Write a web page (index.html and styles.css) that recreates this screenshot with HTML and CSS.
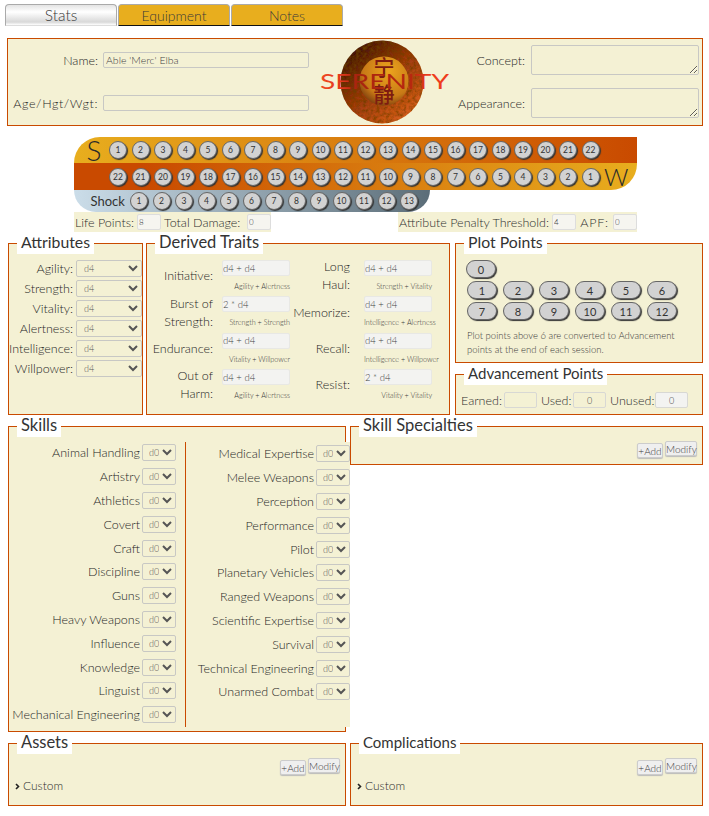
FILE: index.html
```html
<!DOCTYPE html>
<html lang="en">
<head>
<meta charset="utf-8">
<title>Serenity Character Sheet</title>
<link rel="stylesheet" href="styles.css">
</head>
<body>
<nav class="tabs">
  <a class="tab tab-active">Stats</a>
  <a class="tab">Equipment</a>
  <a class="tab">Notes</a>
</nav>

<header class="identity">
  <div class="id-left">
    <label class="lbl">Name:</label><input class="field" value="Able 'Merc' Elba">
    <label class="lbl lbl-wide">Age/Hgt/Wgt:</label><input class="field">
  </div>
  <svg class="logo" width="129" height="84" viewBox="0 0 129 84">
    <defs>
      <linearGradient id="outer" x1="0.15" y1="0.1" x2="0.85" y2="0.9">
        <stop offset="0" stop-color="#3e140c"/>
        <stop offset="0.45" stop-color="#9a3810"/>
        <stop offset="1" stop-color="#d8601c"/>
      </linearGradient>
      <radialGradient id="inner" cx="0.6" cy="0.3" r="0.75">
        <stop offset="0" stop-color="#eca41e"/>
        <stop offset="0.7" stop-color="#c87a16"/>
        <stop offset="1" stop-color="#7a3c0e"/>
      </radialGradient>
      <linearGradient id="nameFill" gradientUnits="userSpaceOnUse" x1="0" y1="0" x2="129" y2="0">
        <stop offset="0" stop-color="#f04a22"/>
        <stop offset="0.17" stop-color="#e2381c"/>
        <stop offset="0.28" stop-color="#a8240f"/>
        <stop offset="0.72" stop-color="#b8280f"/>
        <stop offset="0.84" stop-color="#ee3c1c"/>
        <stop offset="1" stop-color="#ee3c1c"/>
      </linearGradient>
      <filter id="tex" x="0" y="0" width="100%" height="100%">
        <feTurbulence type="fractalNoise" baseFrequency="0.3" numOctaves="3" seed="4" result="n"/>
        <feColorMatrix in="n" type="matrix" values="0 0 0 0 0.15  0 0 0 0 0.05  0 0 0 0 0  0 0 0 1.6 -0.55" result="d"/>
        <feComposite in="d" in2="SourceAlpha" operator="in" result="c"/>
        <feMerge><feMergeNode in="SourceGraphic"/><feMergeNode in="c"/></feMerge>
      </filter>
    </defs>
    <circle cx="62" cy="42" r="41.5" fill="url(#outer)" filter="url(#tex)"/>
    <circle cx="64" cy="41" r="24.5" fill="url(#inner)"/>
    <text class="logo-cjk" x="64" y="35" text-anchor="middle">宁</text>
    <text class="logo-cjk" x="64" y="62" text-anchor="middle">静</text>
    <text class="logo-name" x="0" y="49" textLength="129" lengthAdjust="spacingAndGlyphs">SERENITY</text>
  </svg>
  <div class="id-right">
    <label class="lbl">Concept:</label><textarea class="area"></textarea>
    <label class="lbl">Appearance:</label><textarea class="area"></textarea>
  </div>
</header>

<section class="track">
  <div class="track-row row-stun">
    <span class="track-letter">S</span>
    <span class="pip">1</span><span class="pip">2</span><span class="pip">3</span><span class="pip">4</span><span class="pip">5</span><span class="pip">6</span><span class="pip">7</span><span class="pip">8</span><span class="pip">9</span><span class="pip">10</span><span class="pip">11</span><span class="pip">12</span><span class="pip">13</span><span class="pip">14</span><span class="pip">15</span><span class="pip">16</span><span class="pip">17</span><span class="pip">18</span><span class="pip">19</span><span class="pip">20</span><span class="pip">21</span><span class="pip">22</span>
  </div>
  <div class="track-row row-wound">
    <span class="pip">22</span><span class="pip">21</span><span class="pip">20</span><span class="pip">19</span><span class="pip">18</span><span class="pip">17</span><span class="pip">16</span><span class="pip">15</span><span class="pip">14</span><span class="pip">13</span><span class="pip">12</span><span class="pip">11</span><span class="pip">10</span><span class="pip">9</span><span class="pip">8</span><span class="pip">7</span><span class="pip">6</span><span class="pip">5</span><span class="pip">4</span><span class="pip">3</span><span class="pip">2</span><span class="pip">1</span>
    <span class="letter-w">W</span>
  </div>
  <div class="track-row row-shock">
    <span class="shock-label">Shock</span>
    <span class="pip">1</span><span class="pip">2</span><span class="pip">3</span><span class="pip">4</span><span class="pip">5</span><span class="pip">6</span><span class="pip">7</span><span class="pip">8</span><span class="pip">9</span><span class="pip">10</span><span class="pip">11</span><span class="pip">12</span><span class="pip">13</span>
  </div>
  <div class="life-row">
    <div class="life-group"><span>Life Points:</span><input class="mini" value="8"><span class="life-total">Total Damage:</span><input class="mini" value="0"></div>
    <div class="life-group"><span class="life-threshold">Attribute Penalty Threshold:</span><input class="mini" value="4"><span class="life-apf">APF:</span><input class="mini" value="0"></div>
  </div>
</section>

<div class="stats-grid">
  <fieldset class="panel panel-attr">
    <legend class="legend-narrow">Attributes</legend>
    <div class="attr-list">
      <label class="lbl">Agility:</label><select class="sel"><option>d4</option></select>
      <label class="lbl">Strength:</label><select class="sel"><option>d4</option></select>
      <label class="lbl">Vitality:</label><select class="sel"><option>d4</option></select>
      <label class="lbl">Alertness:</label><select class="sel"><option>d4</option></select>
      <label class="lbl">Intelligence:</label><select class="sel"><option>d4</option></select>
      <label class="lbl">Willpower:</label><select class="sel"><option>d4</option></select>
    </div>
  </fieldset>

  <fieldset class="panel panel-derived">
    <legend>Derived Traits</legend>
    <div class="derived-cols">
      <div class="derived-col">
        <div class="trait"><label class="lbl">Initiative:</label><div class="trait-val"><input class="calc" value="d4 + d4"><small>Agility + Alertness</small></div></div>
        <div class="trait"><label class="lbl">Burst of<br>Strength:</label><div class="trait-val"><input class="calc" value="2 * d4"><small>Strength + Strength</small></div></div>
        <div class="trait"><label class="lbl">Endurance:</label><div class="trait-val"><input class="calc" value="d4 + d4"><small>Vitality + Willpower</small></div></div>
        <div class="trait"><label class="lbl">Out of<br>Harm:</label><div class="trait-val"><input class="calc" value="d4 + d4"><small>Agility + Alertness</small></div></div>
      </div>
      <div class="derived-col">
        <div class="trait"><label class="lbl">Long<br>Haul:</label><div class="trait-val"><input class="calc" value="d4 + d4"><small>Strength + Vitality</small></div></div>
        <div class="trait"><label class="lbl">Memorize:</label><div class="trait-val"><input class="calc" value="d4 + d4"><small>Intelligence + Alertness</small></div></div>
        <div class="trait"><label class="lbl">Recall:</label><div class="trait-val"><input class="calc" value="d4 + d4"><small>Intelligence + Willpower</small></div></div>
        <div class="trait"><label class="lbl">Resist:</label><div class="trait-val"><input class="calc" value="2 * d4"><small>Vitality + Vitality</small></div></div>
      </div>
    </div>
  </fieldset>

  <div class="right-stack">
    <fieldset class="panel panel-plot">
      <legend class="legend-narrow">Plot Points</legend>
      <div class="plot-zero"><span class="plot">0</span></div>
      <div class="plot-grid">
        <span class="plot">1</span><span class="plot">2</span><span class="plot">3</span><span class="plot">4</span><span class="plot">5</span><span class="plot">6</span>
        <span class="plot">7</span><span class="plot">8</span><span class="plot">9</span><span class="plot">10</span><span class="plot">11</span><span class="plot">12</span>
      </div>
      <p class="plot-note">Plot points above 6 are converted to Advancement points at the end of each session.</p>
    </fieldset>
    <fieldset class="panel panel-adv">
      <legend class="legend-tight">Advancement Points</legend>
      <div class="adv-row">
        <span class="adv-earned">Earned:</span><input class="mini-adv">
        <span class="adv-used">Used:</span><input class="mini-adv mini-num" value="0">
        <span class="adv-unused">Unused:</span><input class="mini-adv mini-num mini-gray" value="0">
      </div>
    </fieldset>
  </div>
</div>

<div class="skills-grid">
  <fieldset class="panel panel-skills">
    <legend>Skills</legend>
    <div class="skill-cols">
      <div class="skill-col skill-col-left">
        <div class="skill"><label class="lbl">Animal Handling</label><select class="sel-s"><option>d0</option></select></div>
        <div class="skill"><label class="lbl">Artistry</label><select class="sel-s"><option>d0</option></select></div>
        <div class="skill"><label class="lbl">Athletics</label><select class="sel-s"><option>d0</option></select></div>
        <div class="skill"><label class="lbl">Covert</label><select class="sel-s"><option>d0</option></select></div>
        <div class="skill"><label class="lbl">Craft</label><select class="sel-s"><option>d0</option></select></div>
        <div class="skill"><label class="lbl">Discipline</label><select class="sel-s"><option>d0</option></select></div>
        <div class="skill"><label class="lbl">Guns</label><select class="sel-s"><option>d0</option></select></div>
        <div class="skill"><label class="lbl">Heavy Weapons</label><select class="sel-s"><option>d0</option></select></div>
        <div class="skill"><label class="lbl">Influence</label><select class="sel-s"><option>d0</option></select></div>
        <div class="skill"><label class="lbl">Knowledge</label><select class="sel-s"><option>d0</option></select></div>
        <div class="skill"><label class="lbl">Linguist</label><select class="sel-s"><option>d0</option></select></div>
        <div class="skill"><label class="lbl">Mechanical Engineering</label><select class="sel-s"><option>d0</option></select></div>
      </div>
      <div class="skill-col skill-col-right">
        <div class="skill"><label class="lbl">Medical Expertise</label><select class="sel-s"><option>d0</option></select></div>
        <div class="skill"><label class="lbl">Melee Weapons</label><select class="sel-s"><option>d0</option></select></div>
        <div class="skill"><label class="lbl">Perception</label><select class="sel-s"><option>d0</option></select></div>
        <div class="skill"><label class="lbl">Performance</label><select class="sel-s"><option>d0</option></select></div>
        <div class="skill"><label class="lbl">Pilot</label><select class="sel-s"><option>d0</option></select></div>
        <div class="skill"><label class="lbl">Planetary Vehicles</label><select class="sel-s"><option>d0</option></select></div>
        <div class="skill"><label class="lbl">Ranged Weapons</label><select class="sel-s"><option>d0</option></select></div>
        <div class="skill"><label class="lbl">Scientific Expertise</label><select class="sel-s"><option>d0</option></select></div>
        <div class="skill"><label class="lbl">Survival</label><select class="sel-s"><option>d0</option></select></div>
        <div class="skill"><label class="lbl">Technical Engineering</label><select class="sel-s"><option>d0</option></select></div>
        <div class="skill"><label class="lbl">Unarmed Combat</label><select class="sel-s"><option>d0</option></select></div>
      </div>
    </div>
  </fieldset>
  <fieldset class="panel panel-spec">
    <legend>Skill Specialties</legend>
    <div class="btn-row"><button class="btn btn-add">+Add</button><button class="btn btn-mod">Modify</button></div>
  </fieldset>
</div>

<div class="bottom-grid">
  <fieldset class="panel panel-list">
    <legend>Assets</legend>
    <div class="btn-row"><button class="btn btn-add">+Add</button><button class="btn btn-mod">Modify</button></div>
    <div class="custom"><svg class="chev" width="5" height="7" viewBox="0 0 5 7"><path d="M1 1l2.5 2.5L1 6" fill="none" stroke="#222" stroke-width="1.6"/></svg>Custom</div>
  </fieldset>
  <fieldset class="panel panel-list">
    <legend class="legend-tight">Complications</legend>
    <div class="btn-row"><button class="btn btn-add">+Add</button><button class="btn btn-mod">Modify</button></div>
    <div class="custom"><svg class="chev" width="5" height="7" viewBox="0 0 5 7"><path d="M1 1l2.5 2.5L1 6" fill="none" stroke="#222" stroke-width="1.6"/></svg>Custom</div>
  </fieldset>
</div>
</body>
</html>
```

FILE: styles.css
```css
* { box-sizing: border-box; }
html, body { margin: 0; padding: 0; }
body {
  width: 709px;
  height: 816px;
  overflow: hidden;
  background: #fff;
  color: #2e2e2e;
  font-family: "Lato", "Liberation Sans", sans-serif;
  font-weight: 300;
  font-size: 12.5px;
}

/* Tabs */
.tabs { display: flex; gap: 1px; padding: 4px 0 0 5px; height: 38px; }
.tab {
  width: 112px; height: 22px;
  display: flex; align-items: center; justify-content: center;
  border: 1px solid #aaa; border-bottom: 1px solid #111; border-radius: 4px 4px 0 0;
  background: #e8ae1e; color: #3a3a3a; font-size: 14px;
}
.tab-active {
  background: linear-gradient(#e4e4e4, #fff 35%, #d8d8d8 85%, #fff);
  border-bottom-color: #ddd;
  font-size: 15.5px;
}

/* Identity */
.identity {
  display: flex; margin-left: 7px; width: 696px; height: 88px;
  background: #f4f1d4; border: 1px solid #c94a00;
}
.lbl { text-align: right; color: #262626; }
.lbl-wide { letter-spacing: 0.6px; white-space: nowrap; }
.id-left {
  display: grid; grid-template-columns: 90px 206px; column-gap: 5px; row-gap: 27px;
  align-content: start; align-items: center; padding-top: 13px; width: 301px;
}
.field {
  height: 16px; border: 1px solid #c8c8c4; border-radius: 2px; background: #f4f1d4;
  font: 300 10.5px "Lato", sans-serif; color: #444; padding: 0 2px;
}
.logo { margin: 1px 0 0 11px; flex: none; }
.logo-cjk { font-family: "Noto Sans CJK SC", sans-serif; font-size: 21px; font-weight: 500; fill: #7e1c10; }
.logo-name { font-family: "Lato", sans-serif; font-size: 22px; font-weight: 400; fill: url(#nameFill); }
.id-right {
  display: grid; grid-template-columns: 76px 168px; column-gap: 6px; row-gap: 13px;
  align-content: start; align-items: center; padding-top: 6px;
}
.area {
  height: 30px; border: 1px solid #c8c8c4; border-radius: 2px; background: #f4f1d4; margin: 0;
}

/* Track */
.track { margin: 11px 0 0 74px; width: 563px; }
.track-row { display: flex; align-items: center; gap: 4.5px; }
.row-stun {
  height: 26px; padding-left: 35px;
  background: linear-gradient(90deg, #e8ae1e, #c94a00);
  border-radius: 26px 0 0 0;
}
.row-wound {
  height: 27px; padding-left: 35px;
  background: linear-gradient(90deg, #c94a00 0, #c94a00 12%, #e8ae1e 100%);
  border-radius: 0 0 26px 0;
}
.row-shock {
  height: 22px; width: 356px; padding-left: 56px;
  background: linear-gradient(90deg, #cbdde9, #5b6d78);
  border-radius: 0 0 26px 26px;
}
.track-letter { font-size: 28px; font-weight: 300; color: #2a2a2a; width: 0; margin-left: -4.5px; transform: translateX(-18px); line-height: 1; }
.letter-w { font-size: 24px; font-weight: 300; color: #2a2a2a; line-height: 1; margin-left: 0; }
.shock-label { width: 0; margin-left: -4.5px; transform: translateX(-35px); font-size: 13px; color: #333; font-weight: 400; }
.pip {
  flex: none; width: 18px; height: 18px; border-radius: 50%;
  display: flex; align-items: center; justify-content: center;
  background: #d2d2d2; border: 1px solid #666; box-shadow: 1px 1px 1px #333;
  font-size: 8.5px; color: #333; font-weight: 400;
}
.life-row { display: flex; justify-content: space-between; height: 20px; }
.life-group {
  display: flex; align-items: center; gap: 3px; background: #f4f1d4; padding-left: 1px;
}
.life-total { min-width: 80px; white-space: nowrap; }
.life-threshold { white-space: nowrap; }
.life-apf { min-width: 31px; text-align: center; letter-spacing: 0.8px; }
.mini {
  width: 24px; height: 16px; border: 1px solid #ddd; border-radius: 2px; background: #f6f5f0;
  font: 300 8px "Lato", sans-serif; padding: 0 1px; color: #444;
}

/* Panels */
.panel {
  margin: 0; min-width: 0; padding: 0;
  background: #f4f1d4; border: 1px solid #c94a00;
}
.panel legend {
  margin-left: 8px; padding: 0 4px; height: 22px; background: #fff;
  font-size: 16.5px; line-height: 20px; color: #333; font-weight: 400;
}
.panel legend.legend-narrow { font-size: 15.8px; }
.panel legend.legend-tight { font-size: 15px; }

.stats-grid {
  display: grid; grid-template-columns: 135px 304px 250px; height: 183px;
  margin-left: 8px; column-gap: 3px;
}
.right-stack { margin-left: 2px; display: flex; flex-direction: column; }
.attr-list {
  display: grid; grid-template-columns: 64px 66px; column-gap: 3px; row-gap: 3px;
  grid-auto-rows: 17px; align-items: center; padding-top: 6px;
}
.sel, .sel-s {
  margin: 0; height: 17px; border: 1px solid #c8c8c4; border-radius: 2px;
  background-color: #f4f1d4; color: #555; font: 300 9px "Lato", sans-serif; padding: 0;
}
.sel { width: 66px; padding-left: 3px; }
.derived-cols { display: grid; grid-template-columns: 143px 142px; padding-top: 6px; }
.derived-col { display: flex; flex-direction: column; }
.trait { display: flex; height: 36.4px; }
.trait .lbl { width: 66px; margin-right: 9px; align-self: center; line-height: 18px; margin-top: -4px; flex: none; }
.trait-val { width: 68px; flex: none; text-align: right; }
.calc {
  display: block; width: 68px; height: 16px; border: 1px solid #e8e8e4; border-radius: 2px;
  background: #f3f3f1; font: 300 9.5px "Lato", sans-serif; padding: 0; color: #444;
}
.trait-val small { display: block; font-size: 7.2px; margin-top: 6px; white-space: nowrap; color: #3a3a3a; line-height: 9px; }
.derived-col + .derived-col .trait .lbl { width: 60px; margin-right: 14px; }

.panel-plot { height: 131px; padding: 6px 0 0; }
.plot {
  width: 30px; height: 18px; display: flex; align-items: center; justify-content: center;
  border: 1px solid #666; border-radius: 9px; background: #d2d2d2; box-shadow: 1px 1px 1px #333;
  font-size: 11px; font-weight: 400; color: #333;
}
.plot-zero { margin: 0 0 3px 10px; }
.plot-grid { display: grid; grid-template-columns: repeat(6, 30px); column-gap: 6px; row-gap: 3px; margin-left: 11px; }
.plot-note { margin: 9px 16px 0 11px; font-size: 9.5px; line-height: 14px; color: #3a3a3a; font-weight: 300; }
.panel-adv { height: 52px; }
.adv-row { display: flex; align-items: center; padding: 7px 0 0 5px; font-size: 12.5px; }
.adv-earned { width: 43px; white-space: nowrap; }
.adv-used { width: 32px; margin-left: 4px; }
.adv-unused { width: 45px; margin-left: 4px; }
.mini-adv {
  width: 33px; height: 16px; border: 1px solid #d8d8d4; border-radius: 2px; background: #f4f1d4;
  font: 300 9px "Lato", sans-serif; text-align: center; padding: 0; color: #444;
}
.mini-gray { background: #f3f3f1; }

.skills-grid { display: grid; grid-template-columns: 338px 353px; column-gap: 4px; margin-left: 8px; }
.panel-skills { height: 317px; }
.skill-cols { display: grid; grid-template-columns: 177px 164px; margin-top: 5px; height: 285px; margin-right: -5px; }
.skill-col { display: flex; flex-direction: column; background: #f4f1d4; }
.skill-col-left { border-right: 1px solid #c94a00; }
.skill-col-left .skill:first-child { margin-top: -1px; }
.skill { display: flex; flex: none; justify-content: flex-end; align-items: center; gap: 2px; height: 23.8px; }
.sel-s { width: 34px; padding-left: 2px; }
.skill-col-left .skill { padding-right: 9px; }
.panel-spec { height: 50px; align-self: start; }
.btn-row { display: flex; justify-content: flex-end; align-items: flex-start; gap: 2px; padding: 4px 5px 0 0; }
.btn {
  margin: 0; padding: 0; height: 15px; border: 1px solid #ccc; border-radius: 2px; background: #efefef;
  font: 300 10px "Lato", sans-serif; color: #3a3a3a; box-shadow: 0 1px 1px #bbb;
}
.btn-add { width: 26px; margin-top: 2px; }
.btn-mod { width: 32px; }

.bottom-grid { display: grid; grid-template-columns: 338px 353px; column-gap: 4px; margin-left: 8px; }
.panel-list { height: 74px; }
.custom { display: flex; align-items: center; gap: 3px; padding-left: 6px; margin-top: 3px; font-size: 12px; line-height: 16px; }
.chev { flex: none; }
```
